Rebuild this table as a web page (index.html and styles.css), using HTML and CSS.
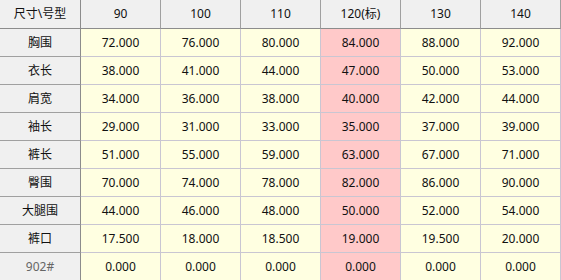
FILE: index.html
```html
<!DOCTYPE html>
<html lang="zh">
<head>
<meta charset="utf-8">
<link rel="stylesheet" href="styles.css">
</head>
<body>
<div class="grid">
  <div class="cell head corner">尺寸\号型</div>
  <div class="cell head">90</div>
  <div class="cell head">100</div>
  <div class="cell head">110</div>
  <div class="cell head">120(标)</div>
  <div class="cell head">130</div>
  <div class="cell head">140</div>

  <div class="cell rowh">胸围</div>
  <div class="cell">72.000</div><div class="cell">76.000</div><div class="cell">80.000</div><div class="cell std">84.000</div><div class="cell">88.000</div><div class="cell">92.000</div>

  <div class="cell rowh">衣长</div>
  <div class="cell">38.000</div><div class="cell">41.000</div><div class="cell">44.000</div><div class="cell std">47.000</div><div class="cell">50.000</div><div class="cell">53.000</div>

  <div class="cell rowh">肩宽</div>
  <div class="cell">34.000</div><div class="cell">36.000</div><div class="cell">38.000</div><div class="cell std">40.000</div><div class="cell">42.000</div><div class="cell">44.000</div>

  <div class="cell rowh">袖长</div>
  <div class="cell">29.000</div><div class="cell">31.000</div><div class="cell">33.000</div><div class="cell std">35.000</div><div class="cell">37.000</div><div class="cell">39.000</div>

  <div class="cell rowh">裤长</div>
  <div class="cell">51.000</div><div class="cell">55.000</div><div class="cell">59.000</div><div class="cell std">63.000</div><div class="cell">67.000</div><div class="cell">71.000</div>

  <div class="cell rowh">臀围</div>
  <div class="cell">70.000</div><div class="cell">74.000</div><div class="cell">78.000</div><div class="cell std">82.000</div><div class="cell">86.000</div><div class="cell">90.000</div>

  <div class="cell rowh">大腿围</div>
  <div class="cell">44.000</div><div class="cell">46.000</div><div class="cell">48.000</div><div class="cell std">50.000</div><div class="cell">52.000</div><div class="cell">54.000</div>

  <div class="cell rowh">裤口</div>
  <div class="cell">17.500</div><div class="cell">18.000</div><div class="cell">18.500</div><div class="cell std">19.000</div><div class="cell">19.500</div><div class="cell">20.000</div>

  <div class="cell rowh muted">902#</div>
  <div class="cell">0.000</div><div class="cell">0.000</div><div class="cell">0.000</div><div class="cell std">0.000</div><div class="cell">0.000</div><div class="cell">0.000</div>
</div>
</body>
</html>
```
FILE: styles.css
```css
html, body {
  margin: 0;
  padding: 0;
  background: #ffffff;
  overflow: hidden;
}
.grid {
  display: grid;
  grid-template-columns: 81px repeat(6, 80px);
  grid-template-rows: 29px repeat(9, 28px);
  width: 561px;
  height: 280px;
  font-family: "Noto Sans", "Noto Sans CJK SC", sans-serif;
  font-size: 12px;
  color: #111111;
}
.cell {
  box-sizing: border-box;
  display: flex;
  align-items: center;
  justify-content: center;
  background: #ffffe1;
  border-right: 1px solid #c9c6d2;
  border-bottom: 1px solid #c9c6d2;
  line-height: 1;
}
.head {
  background: #f0f0f0;
  border-right-color: #a0a0a0;
  border-bottom-color: #8c8c8c;
}
.rowh {
  background: #f0f0f0;
  border-right-color: #8c8c8c;
  border-bottom-color: #a0a0a0;
}
.corner {
  border-right-color: #8c8c8c;
}
.std {
  background: #ffc9c9;
}
.muted {
  color: #666666;
}
```
